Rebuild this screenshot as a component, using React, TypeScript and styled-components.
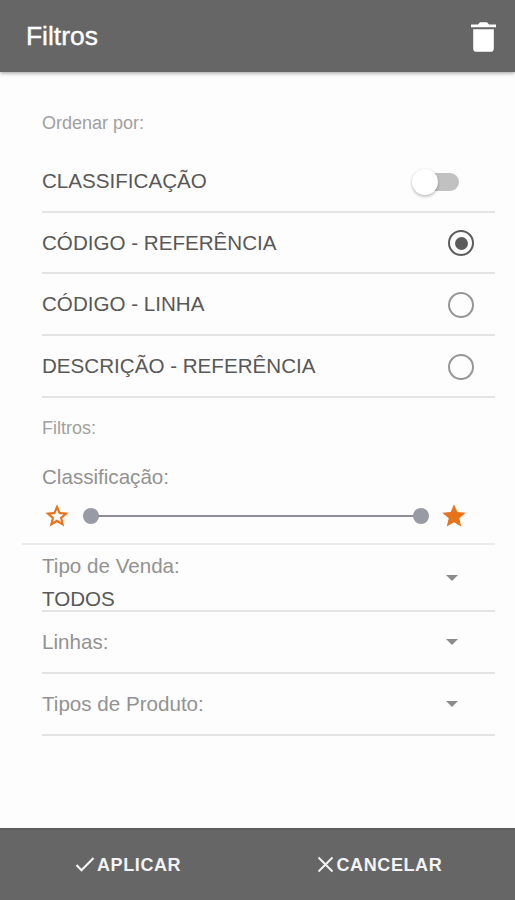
import React, { useState } from 'react';
import styled, { createGlobalStyle } from 'styled-components';

const GlobalStyle = createGlobalStyle`
  * { box-sizing: border-box; }
  body {
    margin: 0;
    background: #fdfdfd;
    font-family: "Liberation Sans", Arial, sans-serif;
  }
  button { font-family: inherit; }
`;

const Screen = styled.div`
  display: flex;
  flex-direction: column;
  width: 515px;
  height: 900px;
  background: #fdfdfd;
  overflow: hidden;
`;

const Header = styled.header`
  display: flex;
  align-items: center;
  justify-content: space-between;
  flex: none;
  height: 72px;
  padding: 0 18px 0 26px;
  background: #666;
  box-shadow: 0 1px 4px rgba(0, 0, 0, 0.4);
`;

const Title = styled.h1`
  margin: 0;
  font-size: 26.4px;
  line-height: 30px;
  font-weight: 400;
  color: #fff;
  -webkit-text-stroke: 0.4px #fff;
`;

const IconButton = styled.button`
  display: flex;
  padding: 1px 0 0;
  border: 0;
  background: none;
  color: #fff;
`;

const Content = styled.main`
  display: flex;
  flex-direction: column;
  flex: 1;
  padding: 29px 20px 0 22px;
`;

const Section = styled.section`
  display: flex;
  flex-direction: column;
  padding-left: 20px;
`;

const Caption = styled.h2<{ $height: number; $after?: number }>`
  display: flex;
  align-items: center;
  height: ${(p) => p.$height}px;
  margin: 0 0 ${(p) => p.$after ?? 0}px;
  font-size: 18px;
  font-weight: 400;
  color: #a0a0a0;
`;

const Row = styled.div<{ $height: number; $inset: number }>`
  display: flex;
  align-items: center;
  justify-content: space-between;
  height: ${(p) => p.$height}px;
  padding-right: ${(p) => p.$inset}px;
  border-bottom: 2px solid #e4e4e4;
`;

const Label = styled.span<{ $muted?: boolean }>`
  font-size: 20.6px;
  line-height: 24px;
  color: ${(p) => (p.$muted ? '#929292' : '#585858')};
  white-space: nowrap;
`;

const Stack = styled.div`
  display: flex;
  flex-direction: column;
  gap: 9px;
  padding-top: 9px;
`;

const SwitchTrack = styled.button`
  display: flex;
  align-items: center;
  width: 44px;
  height: 18px;
  margin-top: 1px;
  padding: 0;
  border: 0;
  border-radius: 9px;
  background: #c1c1c1;
`;

const SwitchKnob = styled.span<{ $on: boolean }>`
  flex: none;
  width: 26px;
  height: 26px;
  margin-left: ${(p) => (p.$on ? 20 : -3)}px;
  border-radius: 50%;
  background: #fff;
  box-shadow: 0 2px 3px rgba(0, 0, 0, 0.2), 0 0 3px rgba(0, 0, 0, 0.1);
`;

const Radio = styled.button<{ $checked: boolean }>`
  display: flex;
  align-items: center;
  justify-content: center;
  width: 26px;
  height: 26px;
  margin-top: 1px;
  padding: 0;
  border: 2.5px solid ${(p) => (p.$checked ? '#5c5c5c' : '#969696')};
  border-radius: 50%;
  background: transparent;
`;

const RadioDot = styled.span`
  width: 13px;
  height: 13px;
  border-radius: 50%;
  background: #5c5c5c;
`;

const RatingBlock = styled.div`
  display: flex;
  flex-direction: column;
  height: 87px;
  padding: 7px 0 0 20px;
  border-bottom: 2px solid #ebebeb;
`;

const RangeRow = styled.div`
  display: flex;
  align-items: center;
  height: 28px;
  margin-top: 13px;
  padding-left: 1px;
`;

const Range = styled.div`
  display: flex;
  align-items: center;
  width: 346px;
  margin: 0 11px 0 11.5px;
  height: 16px;
`;

const Thumb = styled.span`
  flex: none;
  width: 16px;
  height: 16px;
  border-radius: 50%;
  background: #989aa4;
`;

const Rail = styled.span`
  flex: 1;
  height: 2px;
  margin: 0 -1px;
  background: #8e8e94;
`;

const Caret = styled.span`
  width: 0;
  height: 0;
  border: 6px solid transparent;
  border-bottom-width: 0;
  border-top-color: #8b8b8b;
`;

const Footer = styled.footer`
  display: grid;
  grid-template-columns: 1fr 1fr;
  flex: none;
  height: 72px;
  background: #666;
  border-top: 2px solid #5e5e5e;
`;

const Action = styled.button<{ $gap: number; $shift: number }>`
  display: flex;
  align-items: center;
  justify-content: flex-start;
  gap: ${(p) => p.$gap}px;
  padding: 0 0 0 ${(p) => p.$shift}px;
  border: 0;
  background: none;
  color: #f4f4f4;
  font-size: 18px;
  font-weight: 700;
  letter-spacing: 0.6px;
`;

const STAR = 'M12 17.27 18.18 21l-1.64-7.03L22 9.24l-7.19-.61L12 2 9.19 8.63 2 9.24l5.46 4.73L5.82 21z';
const STAR_HOLE =
  'M12 15.1l-3.450 2.080.920-3.930-3.050-2.640 4.020-.350L12 6.550l1.560 3.710 4.020.350-3.050 2.640.920 3.930z';

const Star = ({ filled = false }: { filled?: boolean }) => (
  <svg width="28" height="28" viewBox="0 0 24 24" fill="#e8731a" fillRule="evenodd">
    <path d={filled ? STAR : STAR + STAR_HOLE} />
  </svg>
);

const options = ['CÓDIGO - REFERÊNCIA', 'CÓDIGO - LINHA', 'DESCRIÇÃO - REFERÊNCIA'];

export default function App() {
  const [on, setOn] = useState(false);
  const [selected, setSelected] = useState(0);

  return (
    <>
      <GlobalStyle />
      <Screen>
        <Header>
          <Title>Filtros</Title>
          <IconButton aria-label="Limpar filtros">
            <svg width="27" height="32" viewBox="0 0 27 32" fill="currentColor">
              <path d="M1 3.500h7L10 1.300h7l2 2.200h7v2.800H1zM3.200 8.200h20.600v19.500c0 2-1.200 3.100-3.100 3.100H6.300c-1.900 0-3.100-1.100-3.100-3.100z" />
            </svg>
          </IconButton>
        </Header>

        <Content>
          <Section>
            <Caption $height={45} $after={5}>Ordenar por:</Caption>
            <Row $height={62} $inset={36}>
              <Label>CLASSIFICAÇÃO</Label>
              <SwitchTrack role="switch" aria-checked={on} aria-label="Classificação" onClick={() => setOn(!on)}>
                <SwitchKnob $on={on} />
              </SwitchTrack>
            </Row>
            {options.map((name, i) => (
              <Row key={name} $height={i === 0 ? 61 : 62} $inset={21}>
                <Label>{name}</Label>
                <Radio
                  role="radio"
                  aria-checked={selected === i}
                  aria-label={name}
                  $checked={selected === i}
                  onClick={() => setSelected(i)}
                >
                  {selected === i && <RadioDot />}
                </Radio>
              </Row>
            ))}
            <Caption $height={60}>Filtros:</Caption>
          </Section>

          <RatingBlock>
            <Label $muted>Classificação:</Label>
            <RangeRow>
              <Star />
              <Range>
                <Thumb />
                <Rail />
                <Thumb />
              </Range>
              <Star filled />
            </RangeRow>
          </RatingBlock>

          <Section>
            <Row $height={67} $inset={37}>
              <Stack>
                <Label $muted>Tipo de Venda:</Label>
                <Label>TODOS</Label>
              </Stack>
              <Caret />
            </Row>
            <Row $height={62} $inset={37}>
              <Label $muted>Linhas:</Label>
              <Caret />
            </Row>
            <Row $height={62} $inset={37}>
              <Label $muted>Tipos de Produto:</Label>
              <Caret />
            </Row>
          </Section>
        </Content>

        <Footer>
          <Action $gap={2} $shift={75}>
            <svg width="20" height="20" viewBox="0 0 20 20" fill="none" stroke="currentColor" strokeWidth="2.2">
              <path d="M1.500 10l5 5.200L18.500 3" />
            </svg>
            APLICAR
          </Action>
          <Action $gap={3} $shift={59}>
            <svg width="17" height="18" viewBox="0 0 17 18" fill="none" stroke="currentColor" strokeWidth="2">
              <path d="M1.500 1.500l14 14M15.500 1.500l-14 14" />
            </svg>
            CANCELAR
          </Action>
        </Footer>
      </Screen>
    </>
  );
}
